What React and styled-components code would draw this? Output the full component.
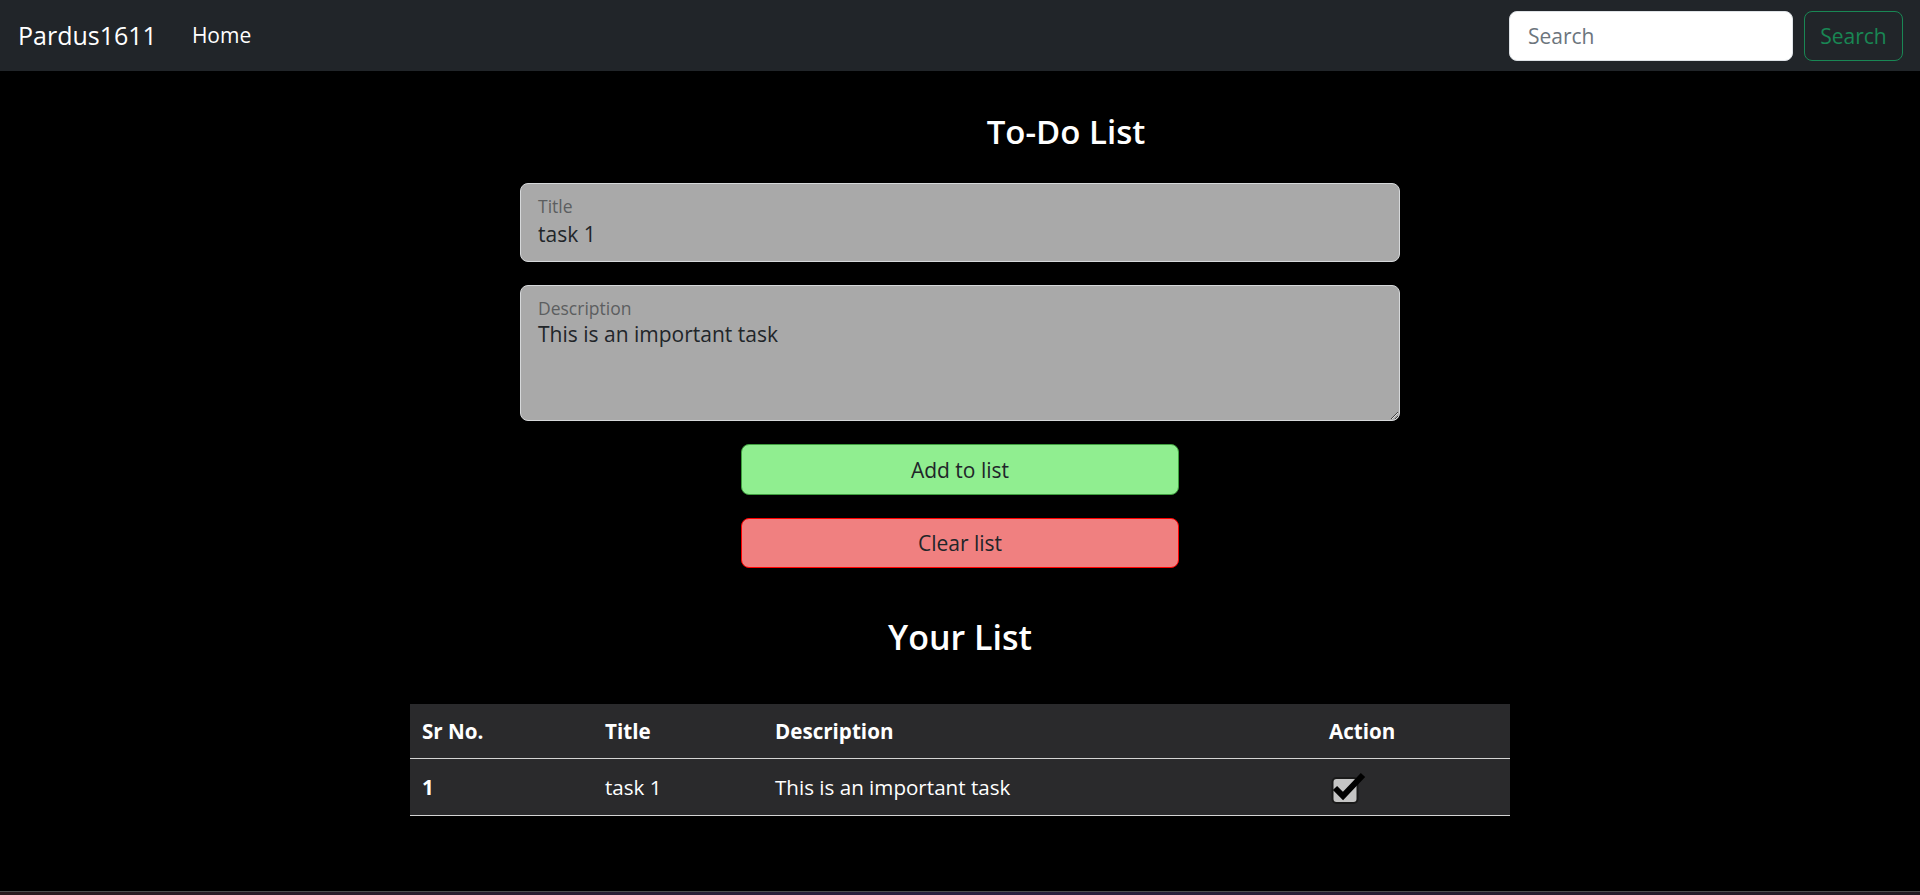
import React from "react";
import styled, { createGlobalStyle } from "styled-components";

const GlobalStyle = createGlobalStyle`
  html, body { margin: 0; padding: 0; background: #000; }
  body { font-family: "Open Sans", "Noto Sans", Arial, sans-serif; color: #fff; }
  * { box-sizing: border-box; }
`;

const Page = styled.div`
  min-height: 100vh;
  display: flex;
  flex-direction: column;
  background: #000;
`;

const Navbar = styled.nav`
  height: 71px;
  background: #212529;
  display: flex;
  align-items: center;
  justify-content: space-between;
  padding: 0 17px 0 18px;
`;

const NavLeft = styled.div`
  display: flex;
  align-items: center;
  gap: 35px;
`;

const Brand = styled.a`
  font-size: 25px;
  color: #fff;
  text-decoration: none;
  line-height: 1.5;
`;

const NavLink = styled.a`
  font-size: 21px;
  color: #fff;
  text-decoration: none;
  line-height: 1.5;
`;

const SearchForm = styled.form`
  display: flex;
  gap: 11px;
`;

const SearchInput = styled.input`
  width: 284px;
  height: 50px;
  border: 1px solid #dee2e6;
  border-radius: 8px;
  background: #fff;
  padding: 0 18px;
  font-family: inherit;
  font-size: 21px;
  color: #212529;
  outline: none;
  &::placeholder { color: #6c757d; }
`;

const OutlineButton = styled.button`
  width: 99px;
  height: 50px;
  border: 1px solid #198754;
  border-radius: 8px;
  background: transparent;
  color: #198754;
  font-family: inherit;
  font-size: 21px;
  cursor: pointer;
  padding: 0;
`;

const Main = styled.main`
  flex: 1;
  display: flex;
  flex-direction: column;
  align-items: center;
`;

const FormColumn = styled.section`
  width: 880px;
  display: flex;
  flex-direction: column;
  align-items: center;
`;

const Heading = styled.h3`
  margin: 40px 0 30px;
  align-self: stretch;
  text-align: center;
  padding-left: ${(p) => p.$offset || 0}px;
  font-size: 33px;
  font-weight: 600;
  line-height: 42px;
  color: #fff;
`;

const Floating = styled.div`
  position: relative;
  width: 100%;
  margin-bottom: 23px;
`;

const FieldLabel = styled.label`
  position: absolute;
  top: 11px;
  left: 18px;
  font-size: 17.5px;
  line-height: 25px;
  color: #5c5e60;
  pointer-events: none;
`;

const fieldBase = `
  display: block;
  width: 100%;
  background: #a9a9a9;
  border: 1px solid #d6d8da;
  border-radius: 8px;
  font-family: inherit;
  font-size: 21px;
  line-height: 30px;
  color: #212529;
  outline: none;
  margin: 0;
`;

const TextInput = styled.input`
  ${fieldBase}
  height: 79px;
  padding: 35px 17px 12px;
`;

const TextArea = styled.textarea`
  ${fieldBase}
  height: 136px;
  padding: 33px 17px 8px;
  resize: vertical;
`;

const ActionButton = styled.button`
  width: 438px;
  height: ${(p) => p.$h}px;
  margin-bottom: 23px;
  border: 1px solid ${(p) => p.$border};
  border-radius: 8px;
  background: ${(p) => p.$bg};
  color: #212529;
  font-family: inherit;
  font-size: 21px;
  cursor: pointer;
`;

const ListHeading = styled.h2`
  margin: 25px 0 46px;
  font-size: 34px;
  font-weight: 600;
  line-height: 42px;
  color: #fff;
  text-align: center;
`;

const Table = styled.table`
  width: 1100px;
  border-collapse: collapse;
  background: #2a2a2c;
  color: #fff;
  font-size: 20.6px;
  line-height: 30px;
  table-layout: fixed;
`;

const HeadCell = styled.th`
  text-align: left;
  font-weight: 700;
  padding: 12px 12px;
  border-bottom: 1px solid #d4d4d4;
`;

const Cell = styled.td`
  padding: ${(p) => (p.$tight ? "12px 12px 10px" : "13px 12px")};
  font-weight: ${(p) => (p.$bold ? 700 : 400)};
  border-bottom: 1px solid #d4d4d4;
  vertical-align: top;
`;

const CheckIcon = styled.svg`
  display: block;
  width: 37px;
  height: 34px;
`;

const Footer = styled.footer`
  height: 4px;
  border-top: 1px solid #4d4d4d;
  background: linear-gradient(90deg, #2a1a1e, #2a2040 50%, #231a22);
`;

const todos = [{ sno: 1, title: "task 1", desc: "This is an important task" }];

export default function App() {
  return (
    <Page>
      <GlobalStyle />
      <Navbar>
        <NavLeft>
          <Brand href="#">Pardus1611</Brand>
          <NavLink href="#">Home</NavLink>
        </NavLeft>
        <SearchForm onSubmit={(e) => e.preventDefault()}>
          <SearchInput type="search" placeholder="Search" />
          <OutlineButton type="submit">Search</OutlineButton>
        </SearchForm>
      </Navbar>
      <Main>
        <FormColumn>
          <Heading $offset={212}>To-Do List</Heading>
          <Floating>
            <TextInput id="title" defaultValue="task 1" />
            <FieldLabel htmlFor="title">Title</FieldLabel>
          </Floating>
          <Floating>
            <TextArea id="desc" defaultValue="This is an important task" />
            <FieldLabel htmlFor="desc">Description</FieldLabel>
          </Floating>
          <ActionButton $h={51} $bg="#90ee90" $border="#3f9f3f">Add to list</ActionButton>
          <ActionButton $h={50} $bg="#f08080" $border="#ff0000">Clear list</ActionButton>
        </FormColumn>
        <ListHeading>Your List</ListHeading>
        <Table>
          <colgroup>
            <col style={{ width: 183 }} />
            <col style={{ width: 170 }} />
            <col style={{ width: 554 }} />
            <col style={{ width: 193 }} />
          </colgroup>
          <thead>
            <tr>
              <HeadCell>Sr No.</HeadCell>
              <HeadCell>Title</HeadCell>
              <HeadCell>Description</HeadCell>
              <HeadCell>Action</HeadCell>
            </tr>
          </thead>
          <tbody>
            {todos.map((t) => (
              <tr key={t.sno}>
                <Cell $bold>{t.sno}</Cell>
                <Cell>{t.title}</Cell>
                <Cell>{t.desc}</Cell>
                <Cell $tight>
                  <CheckIcon viewBox="0 0 37 34">
                    <rect x="3.5" y="7" width="25" height="25" rx="4" fill="#c4c4c4" stroke="#1a1a1a" strokeWidth="2" />
                    <path d="M6 17 L14 25 L34 4" fill="none" stroke="#000" strokeWidth="6" />
                  </CheckIcon>
                </Cell>
              </tr>
            ))}
          </tbody>
        </Table>
      </Main>
      <Footer />
    </Page>
  );
}
